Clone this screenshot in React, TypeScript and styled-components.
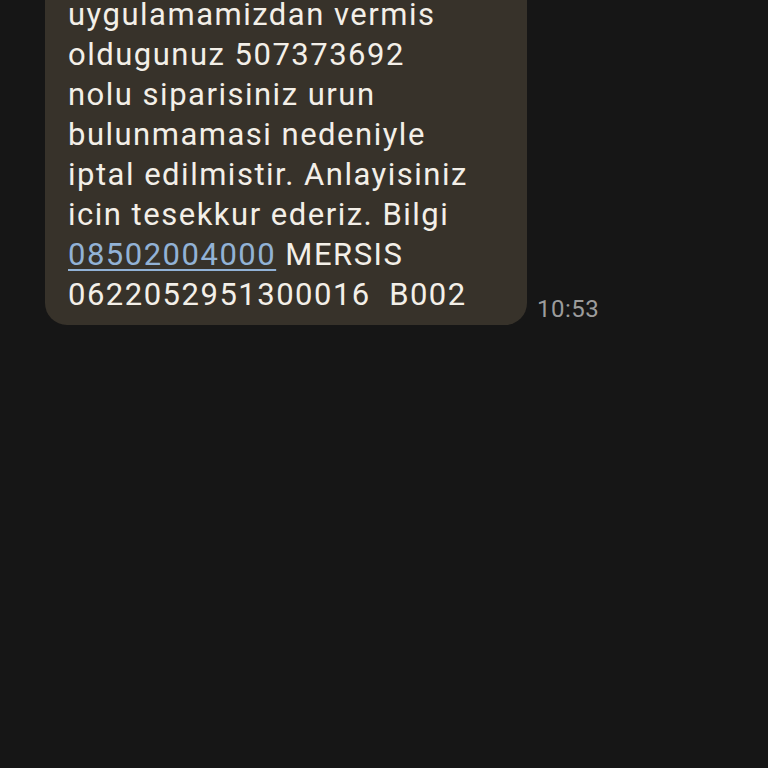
import React from "react";
import styled, { createGlobalStyle } from "styled-components";

const GlobalStyle = createGlobalStyle`
  html, body {
    margin: 0;
    padding: 0;
    background: #161616;
    overflow: hidden;
  }
  body {
    font-family: Roboto, "Noto Sans", sans-serif;
  }
`;

const Screen = styled.div`
  width: 768px;
  height: 768px;
  background: #161616;
  overflow: hidden;
`;

const MessageRow = styled.div`
  display: flex;
  align-items: flex-end;
  gap: 10px;
  margin-top: -42px;
  padding-left: 45px;
`;

const Bubble = styled.div`
  width: 482px;
  box-sizing: border-box;
  padding: 37px 0 10px 23px;
  background: #37322a;
  border-radius: 22px;
  color: #f3efe8;
  font-size: 31px;
  line-height: 40px;
  letter-spacing: 1.5px;
  white-space: pre-wrap;
`;

const Link = styled.span`
  color: #92b2d6;
  text-decoration: underline;
  text-decoration-thickness: 2px;
  text-underline-offset: 4px;
`;

const Time = styled.span`
  color: #9c9c9c;
  font-size: 24px;
  line-height: 24px;
  letter-spacing: 0.5px;
  padding-bottom: 4px;
`;

const lines = [
  "uygulamamizdan vermis",
  "oldugunuz 507373692",
  "nolu siparisiniz urun",
  "bulunmamasi nedeniyle",
  "iptal edilmistir. Anlayisiniz",
  "icin tesekkur ederiz. Bilgi",
];

export default function App() {
  return (
    <Screen>
      <GlobalStyle />
      <MessageRow>
        <Bubble>
          {lines.map((l, i) => (
            <div key={i}>{l}</div>
          ))}
          <div>
            <Link>08502004000</Link> MERSIS
          </div>
          <div>{"0622052951300016  B002"}</div>
        </Bubble>
        <Time>10:53</Time>
      </MessageRow>
    </Screen>
  );
}
